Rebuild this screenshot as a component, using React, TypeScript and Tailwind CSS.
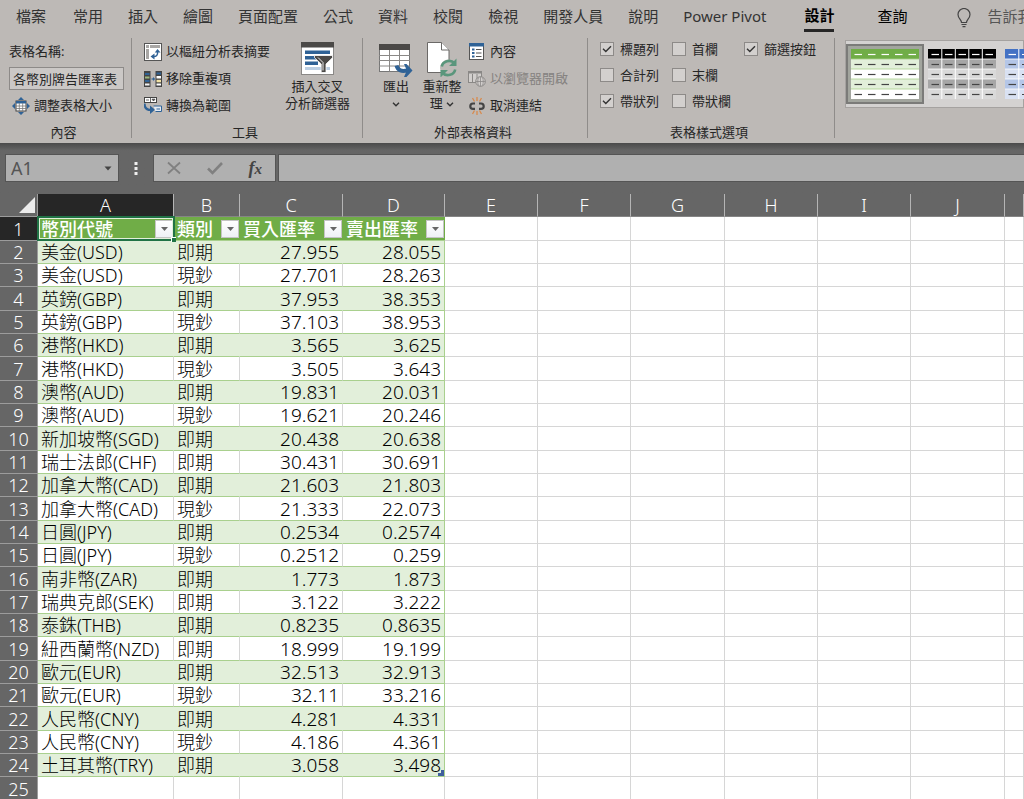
import React, { useState } from "react";
import clsx from "clsx";

type Rate = [name: string, kind: string, buy: string, sell: string];

const RATES: Rate[] = [
    ["美金(USD)", "即期", "27.955", "28.055"],
    ["美金(USD)", "現鈔", "27.701", "28.263"],
    ["英鎊(GBP)", "即期", "37.953", "38.353"],
    ["英鎊(GBP)", "現鈔", "37.103", "38.953"],
    ["港幣(HKD)", "即期", "3.565", "3.625"],
    ["港幣(HKD)", "現鈔", "3.505", "3.643"],
    ["澳幣(AUD)", "即期", "19.831", "20.031"],
    ["澳幣(AUD)", "現鈔", "19.621", "20.246"],
    ["新加坡幣(SGD)", "即期", "20.438", "20.638"],
    ["瑞士法郎(CHF)", "即期", "30.431", "30.691"],
    ["加拿大幣(CAD)", "即期", "21.603", "21.803"],
    ["加拿大幣(CAD)", "現鈔", "21.333", "22.073"],
    ["日圓(JPY)", "即期", "0.2534", "0.2574"],
    ["日圓(JPY)", "現鈔", "0.2512", "0.259"],
    ["南非幣(ZAR)", "即期", "1.773", "1.873"],
    ["瑞典克郎(SEK)", "即期", "3.122", "3.222"],
    ["泰銖(THB)", "即期", "0.8235", "0.8635"],
    ["紐西蘭幣(NZD)", "即期", "18.999", "19.199"],
    ["歐元(EUR)", "即期", "32.513", "32.913"],
    ["歐元(EUR)", "現鈔", "32.11", "33.216"],
    ["人民幣(CNY)", "即期", "4.281", "4.331"],
    ["人民幣(CNY)", "現鈔", "4.186", "4.361"],
    ["土耳其幣(TRY)", "即期", "3.058", "3.498"],
];

const TABS = ["常用", "插入", "繪圖", "頁面配置", "公式", "資料", "校閱", "檢視", "開發人員", "說明", "Power Pivot"];

const HEADINGS = ["幣別代號", "類別", "買入匯率", "賣出匯率"];

const COLUMNS = [
    { letter: "A", width: "w-[136px]" },
    { letter: "B", width: "w-[66px]" },
    { letter: "C", width: "w-[103px]" },
    { letter: "D", width: "w-[102px]" },
    { letter: "E", width: "w-[93px]" },
    { letter: "F", width: "w-[93px]" },
    { letter: "G", width: "w-[94px]" },
    { letter: "H", width: "w-[93px]" },
    { letter: "I", width: "w-[93px]" },
    { letter: "J", width: "w-[94px]" },
    { letter: "", width: "" },
];

const EMPTY = COLUMNS.slice(4);

// Icons

const ResizeIcon = () => (
    <svg width="18" height="18" viewBox="0 0 18 18">
        <path d="M9 0l3 3H6zM9 18l3-3H6zM0 9l3-3v6zM18 9l-3-3v6z" fill="#2f6296" />
        <rect x="4" y="4" width="10" height="10" fill="#fff" stroke="#444" />
        <path d="M4 4h10v2.5H4z" fill="#2f6296" />
        <path d="M4 9h10M4 11.5h10M7.3 6v8M10.7 6v8" stroke="#777" strokeWidth=".8" />
    </svg>
);

const PivotIcon = () => (
    <svg width="18" height="18" viewBox="0 0 18 18">
        <rect x=".5" y=".5" width="17" height="17" fill="#fff" stroke="#555" />
        <path d="M2 2h3v3H2zM6 2h10v3H6zM2 6h3v10H2z" fill="#a9a7a5" />
        <path d="M8.5 13.5c4 .5 5.500-1.500 5-5" fill="none" stroke="#2f6296" strokeWidth="1.5" />
        <path d="M10.5 10.500v6l-4-3zM10.800 9.500l2.700-3.500 3 3.500z" fill="#2f6296" />
    </svg>
);

const DuplicatesIcon = () => (
    <svg width="18" height="16" viewBox="0 0 18 16">
        <rect x="0" y="0" width="6.5" height="16" fill="#444" />
        <path d="M1 2h4.500v2H1z" fill="#2f6296" />
        <path d="M1 5.500h4.500v2H1z" fill="#9db87f" />
        <path d="M1 9h4.500v2H1z" fill="#2f6296" />
        <path d="M1 12.500h4.500v2H1z" fill="#f2f2f2" />
        <path d="M7.500 8h2" stroke="#2f6296" strokeWidth="1.2" />
        <path d="M9 6l2.200 2L9 10z" fill="#2f6296" />
        <rect x="11.5" y="0" width="6.5" height="16" fill="#444" />
        <path d="M12.500 1.500H17v2h-4.500z" fill="#2f6296" />
        <path d="M12.500 5H17v2.500h-4.500zM12.500 12.500H17v2h-4.500z" fill="#fff" />
        <path d="M12.500 8.800H17v2.500h-4.500z" fill="#f3e3a4" />
    </svg>
);

const ConvertIcon = () => (
    <svg width="18" height="17" viewBox="0 0 18 17">
        <rect x=".5" y=".5" width="12" height="5" fill="#fff" stroke="#444" />
        <path d="M6.500.5v5M2 3h3M8 2.200h3L9.500 4z" stroke="#444" fill="#444" strokeWidth=".8" />
        <path d="M.5 6.500c0 4.500 2.500 6.500 6.500 6.500" fill="none" stroke="#2f6296" strokeWidth="2.2" />
        <path d="M6 8.500l5 4.300-5 4.200z" fill="#2f6296" />
        <path d="M9.500 9h8v5.500h-6" fill="#e4eaf2" stroke="#2f6296" />
        <path d="M12.500 12h3.500" stroke="#2f6296" />
    </svg>
);

const SlicerIcon = () => (
    <svg width="33" height="33" viewBox="0 0 33 33">
        <rect x=".5" y=".5" width="32" height="32" fill="#fff" stroke="#8a8886" />
        <path d="M0 0h33v5.500H0z" fill="#4b4947" />
        <path d="M4 8.500h25v3.500H4zM4 14h12v3.500H4zM4 19.500h13V23H4z" fill="#2f6296" />
        <path d="M4 25h25v3H4z" fill="#bccfe3" />
        <path d="M13.500 13.500h18v2.200l-6.500 6.300v8.500h-4.800V22l-6.700-6.300z" fill="#4b4947" stroke="#fff" strokeWidth=".8" />
        <path d="M17 15.500l5 5v8" fill="none" stroke="#fff" strokeWidth=".9" />
    </svg>
);

const ExportIcon = () => (
    <svg width="34" height="34" viewBox="0 0 34 34">
        <rect x=".5" y="1.5" width="30" height="27" fill="#fff" stroke="#777" />
        <path d="M0 1h31v6H0z" fill="#4b4947" />
        <path d="M0 12.500h31M0 17.500h31M0 23h31M10.500 7v21.500M20.500 7v21.500" stroke="#8a8886" />
        <path d="M17.500 22.500c1.500 5.500 5 6 11 5" fill="none" stroke="#2f6296" strokeWidth="4" />
        <path d="M25 21h2.500l6 6.500-6 6.500H25l2-4.500v-4z" fill="#2f6296" />
    </svg>
);

const RefreshIcon = () => (
    <svg width="32" height="35" viewBox="0 0 32 35">
        <path d="M1.500.5h14l7.500 7.500v22.500H1.500z" fill="#fff" stroke="#6b6967" />
        <path d="M15.500.5V8H23" fill="#fff" stroke="#6b6967" />
        <circle cx="22.5" cy="26" r="8.5" fill="#bdb9b6" />
        <path d="M15.800 24.500c1-5.500 8.500-7.500 12.700-3.500M29.200 27.500c-1 5.500-8.500 7.500-12.700 3.500" fill="none" stroke="#5a967c" strokeWidth="2.6" />
        <path d="M30.500 16.500v7.500H23zM14.500 35.500V28H22z" fill="#5a967c" />
    </svg>
);

const PropertiesIcon = () => (
    <svg width="16" height="17" viewBox="0 0 16 17">
        <rect x=".5" y=".5" width="14" height="16" fill="#fff" stroke="#555" />
        <path d="M0 0h15v3.500H0z" fill="#2f6296" />
        <path d="M3 5.500h2.500v2H3zM3 9h2.500v2H3zM3 12.500h2.500v2H3z" fill="#2f6296" />
        <path d="M7 6.500h5.500M7 10h5.500M7 13.500h5.500" stroke="#555" />
    </svg>
);

const BrowserIcon = () => (
    <svg width="18" height="16" viewBox="0 0 18 16">
        <rect x=".5" y=".5" width="13" height="11" fill="#d2cfcd" stroke="#8a8886" />
        <path d="M0 0h14v2.500H0z" fill="#8a8886" />
        <path d="M4.500 3v8.500M9 3v8.500" stroke="#8a8886" />
        <circle cx="12.5" cy="10.5" r="4.8" fill="#d2cfcd" stroke="#8a8886" />
        <path d="M7.700 10.500h9.600M12.500 5.700v9.600M10.500 6.500c-1 2.500-1 5.500 0 8M14.500 6.500c1 2.500 1 5.500 0 8" fill="none" stroke="#8a8886" strokeWidth=".8" />
    </svg>
);

const UnlinkIcon = () => (
    <svg width="16" height="18" viewBox="0 0 16 18">
        <path d="M6 6.500H4a2.700 2.700 0 0 0 0 5.400h2M10 6.500h2a2.700 2.700 0 0 1 0 5.400h-2" fill="none" stroke="#444" strokeWidth="2.2" />
        <path d="M8 0v4M3.500 1l2 3.500M12.500 1l-2 3.500M8 18v-4M3.500 17l2-3.500M12.500 17l-2-3.500" stroke="#d88a4c" strokeWidth="1.3" />
    </svg>
);

const BulbIcon = () => (
    <svg width="14" height="20" viewBox="0 0 14 20" fill="none" stroke="#444" strokeWidth="1.2">
        <path d="M4.500 14.500c0-3-3.500-4-3.500-8a6 6 0 0 1 12 0c0 4-3.500 5-3.500 8z" />
        <path d="M4.500 16.500h5M5.500 18.700h3" />
    </svg>
);

const Chevron = () => (
    <svg width="8" height="5" viewBox="0 0 8 5" className="inline-block">
        <path d="M1 .8l3 3 3-3" fill="none" stroke="#333" strokeWidth="1.4" />
    </svg>
);

// Ribbon parts

function Group({ label, className, children }: { label: string; className: string; children: React.ReactNode }) {
    return (
        <section className={clsx("flex shrink-0 flex-col", className)}>
            <div className="flex h-[81px]">{children}</div>
            <h2 className="mt-[3px] pr-1 pb-px text-center leading-5">{label}</h2>
        </section>
    );
}

const Separator = () => <div className="mb-[5px] w-px shrink-0 bg-[#8f8c8a]" />;

function RowButton({ icon, label, disabled }: { icon: React.ReactNode; label: string; disabled?: boolean }) {
    return (
        <button disabled={disabled} className="flex h-[27px] items-center gap-1 whitespace-nowrap disabled:text-[#858280]">
            <span className="flex w-[18px] justify-center">{icon}</span>
            {label}
        </button>
    );
}

function Option({ label, on }: { label: string; on?: boolean }) {
    const [checked, setChecked] = useState(!!on);
    return (
        <label className="flex h-[22px] items-center gap-[6px] whitespace-nowrap">
            <span className="grid place-items-center">
                <input
                    type="checkbox"
                    checked={checked}
                    onChange={(e) => setChecked(e.target.checked)}
                    className="col-start-1 row-start-1 size-[14px] appearance-none border border-[#8d8a88] bg-[#d3d0ce]"
                />
                {checked && (
                    <svg width="10" height="8" viewBox="0 0 10 8" className="pointer-events-none col-start-1 row-start-1">
                        <path d="M1 3.800l2.800 2.700L9 1.200" fill="none" stroke="#333" strokeWidth="1.4" />
                    </svg>
                )}
            </span>
            {label}
        </label>
    );
}

type Style = { head: string; odd: string; even: string; line: string; split: boolean };

const GREEN: Style = { head: "#70ad47", odd: "#e2efda", even: "#ffffff", line: "#a9d08e", split: false };
const BLACK: Style = { head: "#000000", odd: "#a6a6a6", even: "#d9d9d9", line: "#ffffff", split: true };
const BLUE: Style = { head: "#4472c4", odd: "#b4c6e7", even: "#d9e1f2", line: "#ffffff", split: true };

function Swatch({ head, odd, even, line, split }: Style) {
    const rows = [head, odd, even, odd, even];
    return (
        <svg width="68" height="50" viewBox="0 0 68 50">
            {rows.map((fill, r) => (
                <g key={r}>
                    <rect y={r * 10} width="68" height="10" fill={fill} />
                    {r > 0 && <path d={`M0 ${r * 10}h68`} stroke={line} strokeWidth=".8" />}
                    {[0, 1, 2, 3, 4].map((c) => (
                        <path key={c} d={`M${c * 13.5 + 3.5} ${r * 10 + 5.5}h7.500`} stroke={r ? "#444" : "#fff"} strokeWidth="1.2" />
                    ))}
                </g>
            ))}
            {split && <path d="M13.800 0v50M27.300 0v50M40.800 0v50M54.300 0v50" stroke="#fff" />}
        </svg>
    );
}

function Ribbon() {
    const [tableName, setTableName] = useState("各幣別牌告匯率表");
    return (
        <header className="shrink-0 overflow-hidden bg-[#bdb9b6] text-[#262626]">
            <nav className="flex h-[38px] items-start gap-[25px] pl-4 text-[15px] leading-8 whitespace-nowrap text-[#333]">
                <button className="mr-[2px]">檔案</button>
                {TABS.map((tab) => (
                    <button key={tab}>{tab}</button>
                ))}
                <button className="ml-[13px] flex flex-col font-bold text-black">
                    <span className="pt-px leading-7">設計</span>
                    <span className="h-[3px] w-full bg-[#262626]" />
                </button>
                <button className="ml-[18px] text-black">查詢</button>
                <button className="ml-[25px] flex gap-4 text-[#555]">
                    <span className="mt-2"><BulbIcon /></span>
                    告訴我您想要執行的動作
                </button>
            </nav>

            <div className="flex text-[13px] leading-[17px]">
                <Group label="內容" className="w-[131px]">
                    <div className="flex flex-col pl-[9px]">
                        <label htmlFor="table-name" className="leading-[27px]">表格名稱:</label>
                        <input
                            id="table-name"
                            value={tableName}
                            onChange={(e) => setTableName(e.target.value)}
                            className="my-[2px] h-[23px] w-[115px] border border-[#8d8a88] bg-[#cbc8c6] px-[3px]"
                        />
                        <span className="pl-[3px]"><RowButton icon={<ResizeIcon />} label="調整表格大小" /></span>
                    </div>
                </Group>
                <Separator />
                <Group label="工具" className="w-[230px]">
                    <div className="flex grow flex-col pl-3">
                        <RowButton icon={<PivotIcon />} label="以樞紐分析表摘要" />
                        <RowButton icon={<DuplicatesIcon />} label="移除重複項" />
                        <RowButton icon={<ConvertIcon />} label="轉換為範圍" />
                    </div>
                    <button className="mr-3 flex flex-col items-center pt-1">
                        <SlicerIcon />
                        <span className="mt-[3px]">插入交叉<br />分析篩選器</span>
                    </button>
                </Group>
                <Separator />
                <Group label="外部表格資料" className="w-[224px]">
                    <button className="ml-4 flex w-[34px] flex-col items-center pt-[5px]">
                        <ExportIcon />
                        <span className="mt-px">匯出</span>
                        <span><Chevron /></span>
                    </button>
                    <button className="ml-2 flex w-[42px] flex-col items-center pt-1">
                        <RefreshIcon />
                        <span className="mt-px whitespace-nowrap">重新整<br />理 <Chevron /></span>
                    </button>
                    <div className="ml-[5px] flex flex-col">
                        <RowButton icon={<PropertiesIcon />} label="內容" />
                        <RowButton icon={<BrowserIcon />} label="以瀏覽器開啟" disabled />
                        <RowButton icon={<UnlinkIcon />} label="取消連結" />
                    </div>
                </Group>
                <Separator />
                <Group label="表格樣式選項" className="w-[246px]">
                    <div className="grid grid-cols-[72px_72px_auto] content-start gap-y-1 pl-3">
                        <Option label="標題列" on />
                        <Option label="首欄" />
                        <Option label="篩選按鈕" on />
                        <Option label="合計列" />
                        <Option label="末欄" />
                        <span />
                        <Option label="帶狀列" on />
                        <Option label="帶狀欄" />
                    </div>
                </Group>
                <Separator />
                <div className="mt-[2px] ml-[10px] flex grow items-start self-start border border-[#a5a2a0] bg-[#d4d2d1] py-[3px]">
                    <button aria-label="綠色表格樣式" className="shrink-0 border-2 border-[#7b7b79] bg-[#a2a59e] p-[3px]"><Swatch {...GREEN} /></button>
                    <button aria-label="黑色表格樣式" className="shrink-0 px-1 py-[5px]"><Swatch {...BLACK} /></button>
                    <button aria-label="藍色表格樣式" className="w-0 shrink-0 px-[5px] py-[5px]"><Swatch {...BLUE} /></button>
                </div>
            </div>
        </header>
    );
}

function FormulaBar() {
    const [cell, setCell] = useState("A1");
    const [formula, setFormula] = useState("");
    return (
        <div className="flex h-[51px] shrink-0 bg-gradient-to-b from-[#4a4a4a] to-[#666] to-15% pt-[11px] pb-3 pl-[5px]">
            <div className="flex w-[114px] items-center border border-[#555] bg-[#b0b0b0]">
                <input aria-label="名稱方塊" value={cell} onChange={(e) => setCell(e.target.value)} className="w-0 grow pl-[5px] text-lg text-[#555]" />
                <button aria-label="名稱清單" className="px-[6px]">
                    <svg width="8" height="5" viewBox="0 0 8 5"><path d="M.5.5h7L4 4.500z" fill="#444" /></svg>
                </button>
            </div>
            <svg width="34" height="28" viewBox="0 0 34 28">
                <path d="M15.500 8h3v3h-3zM15.500 13h3v3h-3zM15.500 18h3v3h-3z" fill="#f0f0f0" />
            </svg>
            <div className="flex w-[123px] items-center justify-around border border-[#555] bg-[#b0b0b0]">
                <button aria-label="取消">
                    <svg width="14" height="14" viewBox="0 0 14 14"><path d="M1 1.500l12 11M13 1.500l-12 11" stroke="#808080" strokeWidth="1.8" /></svg>
                </button>
                <button aria-label="輸入">
                    <svg width="16" height="14" viewBox="0 0 16 14"><path d="M1 7.500l4.500 4.500L15 2" fill="none" stroke="#808080" strokeWidth="2.6" /></svg>
                </button>
                <button aria-label="插入函數" className="font-['Liberation_Serif',serif] text-lg leading-6 font-bold text-[#444] italic">
                    f<span className="text-[15px]">x</span>
                </button>
            </div>
            <input
                aria-label="資料編輯列"
                value={formula}
                onChange={(e) => setFormula(e.target.value)}
                className="ml-[2px] w-0 grow border border-r-0 border-[#555] bg-[#b0b0b0] px-2 text-lg"
            />
        </div>
    );
}

function RowNumber({ n, active }: { n: number; active?: boolean }) {
    return (
        <th
            scope="row"
            className={clsx("border-r border-b border-[#9c9c9c] font-light text-white", active ? "bg-[#262626]" : "bg-[#666]")}
        >
            {n}
        </th>
    );
}

const Blanks = ({ columns }: { columns: typeof COLUMNS }) => (
    <>
        {columns.map((c) => (
            <td key={c.letter} className="border-r border-b border-[#d6d6d6]" />
        ))}
    </>
);

function Sheet() {
    return (
        <main className="min-h-0 grow overflow-hidden bg-white">
            <table className="w-full table-fixed border-separate border-spacing-0 text-lg leading-[22px] font-light whitespace-nowrap text-black">
                <colgroup>
                    <col className="w-[38px]" />
                    {COLUMNS.map((c) => (
                        <col key={c.letter} className={c.width} />
                    ))}
                </colgroup>
                <thead>
                    <tr className="h-[23px] bg-[#666]">
                        <th className="border-r border-b border-[#9c9c9c]">
                            <svg width="16" height="16" viewBox="0 0 16 16" className="mr-[2px] ml-auto" aria-label="全選">
                                <path d="M16 0v16H0z" fill="#ececec" />
                            </svg>
                        </th>
                        {COLUMNS.map((c) => (
                            <th
                                key={c.letter}
                                scope="col"
                                className={clsx(
                                    "border-r border-b border-r-[#b5b5b5] border-b-[#858585] font-light text-white",
                                    c.letter === "A" && "bg-[#262626]"
                                )}
                            >
                                {c.letter}
                            </th>
                        ))}
                    </tr>
                </thead>
                <tbody className="[&>tr]:h-[23px] [&>tr:nth-child(3n+1)]:h-6">
                    <tr>
                        <RowNumber n={1} active />
                        {HEADINGS.map((heading, i) => (
                            <th key={heading} scope="col" className="relative border-b border-[#a9d08e] bg-[#70ad47] pr-px pl-[3px] text-left font-medium text-white">
                                <div className="flex items-center justify-between">
                                    {heading}
                                    <button aria-label={`篩選${heading}`} className="flex size-[18px] items-center justify-center border border-[#c4c4c4] bg-gradient-to-b from-white to-[#eef1f5]">
                                        <svg width="7" height="4" viewBox="0 0 7 4"><path d="M0 0h7L3.500 4z" fill="#666" /></svg>
                                    </button>
                                </div>
                                {i === 0 && (
                                    <div className="pointer-events-none absolute -inset-px z-10 border-2 border-[#217346]">
                                        <div className="size-full border border-[#e2efda]" />
                                        <div className="absolute -right-[3px] -bottom-[3px] size-[5px] border-t border-l border-white bg-[#217346]" />
                                    </div>
                                )}
                            </th>
                        ))}
                        <Blanks columns={EMPTY} />
                    </tr>
                    {RATES.map(([name, kind, buy, sell], i) => {
                        const band = i % 2 === 0;
                        const cell = clsx("border-r border-b border-b-[#a9d08e]", band ? "border-r-[#e2efda] bg-[#e2efda]" : "border-r-[#d6d6d6]");
                        return (
                            <tr key={name + kind}>
                                <RowNumber n={i + 2} />
                                <td className={clsx(cell, "pl-[3px]")}>{name}</td>
                                <td className={clsx(cell, "pl-[3px]")}>{kind}</td>
                                <td className={clsx(cell, "pr-[3px] text-right text-[19px]")}>{buy}</td>
                                <td className={clsx("relative border-r border-b border-[#a9d08e] pr-[3px] text-right text-[19px]", band && "bg-[#e2efda]")}>
                                    {sell}
                                    {i === RATES.length - 1 && (
                                        <svg width="6" height="6" viewBox="0 0 6 6" className="absolute right-0 bottom-0">
                                            <path d="M3 0h3v6H0V3h3z" fill="#3f5f9e" />
                                        </svg>
                                    )}
                                </td>
                                <Blanks columns={EMPTY} />
                            </tr>
                        );
                    })}
                    <tr>
                        <RowNumber n={25} />
                        <Blanks columns={COLUMNS} />
                    </tr>
                </tbody>
            </table>
        </main>
    );
}

export default function App() {
    return (
        <div className="flex h-screen flex-col overflow-hidden bg-[#666] font-['Noto_Sans','Noto_Sans_CJK_TC',sans-serif]">
            <Ribbon />
            <FormulaBar />
            <Sheet />
        </div>
    );
}
